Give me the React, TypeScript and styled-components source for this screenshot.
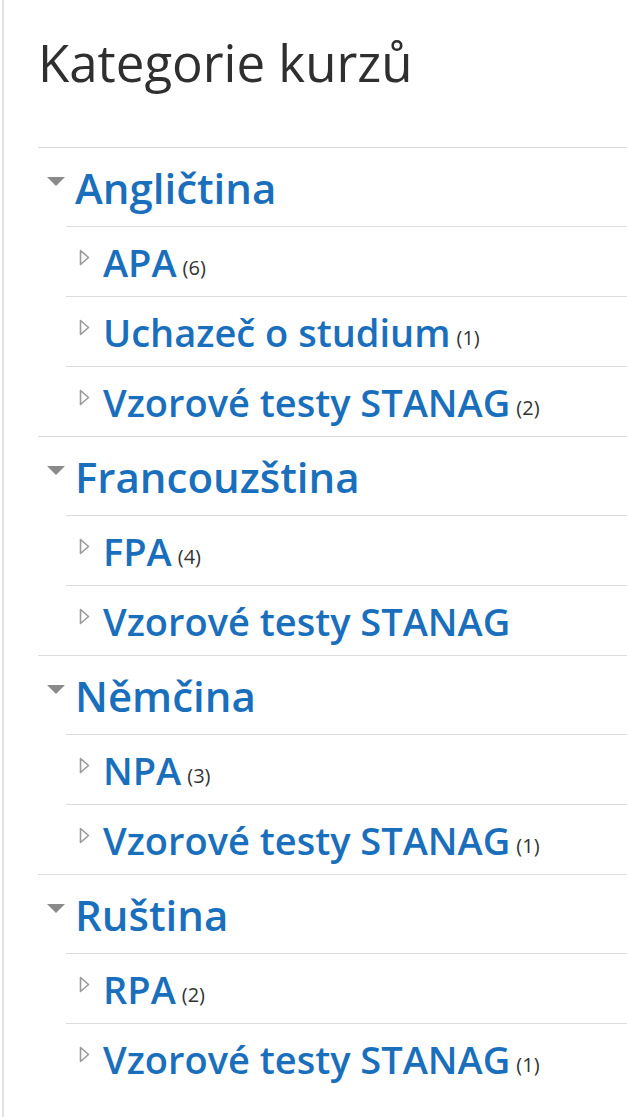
import * as React from 'react';
import styled, { createGlobalStyle } from 'styled-components';

const GlobalStyle = createGlobalStyle`
  html, body {
    margin: 0;
    padding: 0;
    background: #ffffff;
  }
  body {
    font-family: "Open Sans", "Noto Sans", sans-serif;
  }
`;

const Block = styled.div`
  margin-left: 2px;
  min-height: 1117px;
  border-left: 2px solid #e2e2e2;
  padding: 0 0 0 34px;
  box-sizing: border-box;
`;

const Title = styled.h2`
  margin: 0;
  padding-top: 30px;
  height: 147px;
  box-sizing: border-box;
  font-size: 51px;
  font-weight: 400;
  line-height: 64px;
  color: #2f2f2f;
`;

const CategoryList = styled.ul`
  list-style: none;
  margin: 0;
  padding: 0;
`;

const Category = styled.li`
  border-top: 1px solid #dcdcdc;
`;

const CategoryRow = styled.div`
  height: 78px;
  display: flex;
  align-items: center;
`;

const CaretDown = styled.span`
  width: 0;
  height: 0;
  margin: 0 10px 12px 9px;
  border-left: 9px solid transparent;
  border-right: 9px solid transparent;
  border-top: 9px solid #8a8a8a;
`;

const CategoryLink = styled.a`
  font-size: 42px;
  font-weight: 600;
  color: #1a6fbd;
  text-decoration: none;
`;

const SubList = styled.ul`
  list-style: none;
  margin: 0 0 0 28px;
  padding: 0;
`;

const SubItem = styled.li`
  border-top: 1px solid #dcdcdc;
  height: 69px;
  display: flex;
  align-items: center;
`;

const CaretRight = styled.svg`
  width: 11px;
  height: 17px;
  margin: 0 13px 8px 13px;
  flex-shrink: 0;
`;

const SubLink = styled.a`
  font-size: 38px;
  font-weight: 600;
  color: #1a6fbd;
  text-decoration: none;
`;

const Count = styled.span`
  font-size: 20px;
  color: #333333;
  margin: 12px 0 0 6px;
`;

type Course = { name: string; count?: number };
type Group = { name: string; items: Course[] };

const groups: Group[] = [
  {
    name: 'Angličtina',
    items: [
      { name: 'APA', count: 6 },
      { name: 'Uchazeč o studium', count: 1 },
      { name: 'Vzorové testy STANAG', count: 2 },
    ],
  },
  {
    name: 'Francouzština',
    items: [{ name: 'FPA', count: 4 }, { name: 'Vzorové testy STANAG' }],
  },
  {
    name: 'Němčina',
    items: [
      { name: 'NPA', count: 3 },
      { name: 'Vzorové testy STANAG', count: 1 },
    ],
  },
  {
    name: 'Ruština',
    items: [
      { name: 'RPA', count: 2 },
      { name: 'Vzorové testy STANAG', count: 1 },
    ],
  },
];

const Arrow = () => (
  <CaretRight viewBox="0 0 11 17">
    <path d="M1.5 1.5 L9.5 8.5 L1.5 15.5 Z" fill="none" stroke="#9a9a9a" strokeWidth="1.6" strokeLinejoin="round" />
  </CaretRight>
);

const App = () => (
  <>
    <GlobalStyle />
    <Block>
      <Title>Kategorie kurzů</Title>
      <CategoryList>
        {groups.map((g) => (
          <Category key={g.name}>
            <CategoryRow>
              <CaretDown />
              <CategoryLink href="#">{g.name}</CategoryLink>
            </CategoryRow>
            <SubList>
              {g.items.map((c, i) => (
                <SubItem key={i}>
                  <Arrow />
                  <SubLink href="#">{c.name}</SubLink>
                  {c.count !== undefined && <Count>({c.count})</Count>}
                </SubItem>
              ))}
            </SubList>
          </Category>
        ))}
      </CategoryList>
    </Block>
  </>
);

export default App;
